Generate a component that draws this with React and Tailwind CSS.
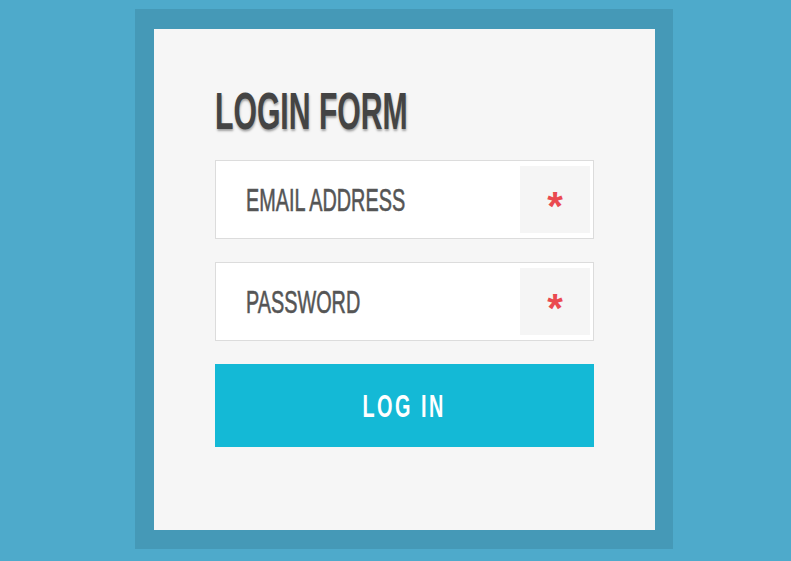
import React from "react";

const font = { fontFamily: '"Liberation Sans", Arial, sans-serif' };

function Field({ label }) {
  return (
    <div className="flex h-[79px] w-[379px] items-stretch border border-[#dcdcdc] bg-white">
      <div className="flex flex-1 items-center pl-[30px]">
        <span className="inline-block origin-left scale-x-[0.62] whitespace-nowrap text-[32px] leading-none text-[#555] [-webkit-text-stroke:0.6px_#555]">
          {label}
        </span>
      </div>
      <div className="my-[5px] mr-[3px] flex w-[70px] items-center justify-center bg-[#f5f5f5] pt-[12px] text-[40px] font-bold leading-none text-[#ea4a50]">
        *
      </div>
    </div>
  );
}

export default function App() {
  return (
    <div className="flex min-h-[561px] w-full bg-[#4eaacb] pl-[135px] pt-[9px]" style={font}>
      <div className="h-[540px] w-[538px] bg-[#4599b7] pl-[19px] pt-[20px]">
        <div className="h-[501px] w-[501px] bg-[#f6f6f6] pl-[61px] pt-[56px]">
          <h1 className="mb-[19px] h-[56px] whitespace-nowrap">
            <span className="inline-block origin-left scale-x-[0.58] text-[52px] font-bold leading-none text-[#444] [text-shadow:1px_2px_3px_rgba(0,0,0,0.35)]">
              LOGIN FORM
            </span>
          </h1>
          <div className="flex flex-col gap-[23px]">
            <Field label="EMAIL ADDRESS" />
            <Field label="PASSWORD" />
            <button className="flex h-[83px] w-[379px] items-center justify-center bg-[#14b9d6]">
              <span className="inline-block scale-x-[0.62] text-[32px] font-bold leading-none tracking-[4px] text-white">
                LOG IN
              </span>
            </button>
          </div>
        </div>
      </div>
    </div>
  );
}
